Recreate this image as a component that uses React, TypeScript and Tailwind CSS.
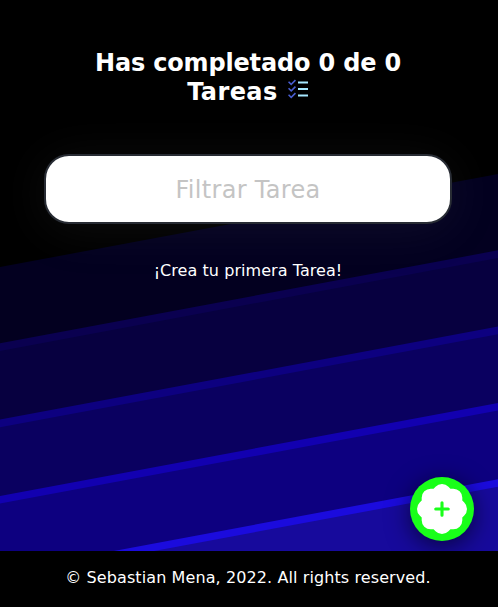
import React from "react";
import { FcTodoList } from "react-icons/fc";
import { BsPatchPlusFill } from "react-icons/bs";

const bands = [
  { y: 267, fill: "#030020" },
  { y: 343.3, fill: "#0a0050" },
  { y: 350.9, fill: "#070040" },
  { y: 419.6, fill: "#0d0080" },
  { y: 427.2, fill: "#0a0060" },
  { y: 496, fill: "#1200b0" },
  { y: 503.6, fill: "#0d0080" },
  { y: 572.2, fill: "#1b0bdd" },
  { y: 579.8, fill: "#170a9c" },
];

function Backdrop() {
  return (
    <svg className="absolute inset-0" width="498" height="607" viewBox="0 0 498 607" aria-hidden="true">
      {bands.map(({ y, fill }) => (
        <polygon key={y} points={`0,${y} 498,${y - 93} 498,700 0,700`} fill={fill} />
      ))}
    </svg>
  );
}

export default function App() {
  return (
    <div className="relative flex h-[607px] w-[498px] flex-col overflow-hidden bg-black font-['DejaVu_Sans',sans-serif] text-white">
      <Backdrop />
      <main className="relative flex flex-1 flex-col items-center pt-[49px] pr-0.5">
        <h1 className="h-[58px] w-[340px] text-center text-[24px] leading-[29px] font-bold tracking-[-0.17px]">
          Has completado 0 de 0 <span className="tracking-[0.4px]">Tareas</span>{" "}
          <FcTodoList className="-mt-2 -mr-px inline-block translate-y-px align-baseline brightness-[1.15]" />
        </h1>
        <input
          className="mt-[47px] h-[70px] w-[408px] rounded-[25px] border-2 border-[#282c34] bg-white pt-0.5 text-center text-[24px] tracking-[0.3px] text-black shadow-[0_5px_50px_rgba(97,97,97,0.14)] outline-none placeholder:text-[#c4c4c4]"
          placeholder="Filtrar Tarea"
        />
        <p className="mt-[35px] text-[16px] leading-6 tracking-[0.06px]">¡Crea tu primera Tarea!</p>
      </main>
      <footer className="relative flex h-14 items-center justify-center bg-black pr-0.5 pb-[3px] text-[16px] tracking-[0.1px]">
        © Sebastian Mena, 2022. All rights reserved.
      </footer>
      <button
        aria-label="Crear tarea"
        className="absolute right-6 bottom-[66px] flex size-16 items-center justify-center rounded-full bg-[#19ff19] text-white shadow-[0_5px_25px_rgba(0,0,0,0.6)]"
      >
        <BsPatchPlusFill size={50} />
      </button>
    </div>
  );
}
